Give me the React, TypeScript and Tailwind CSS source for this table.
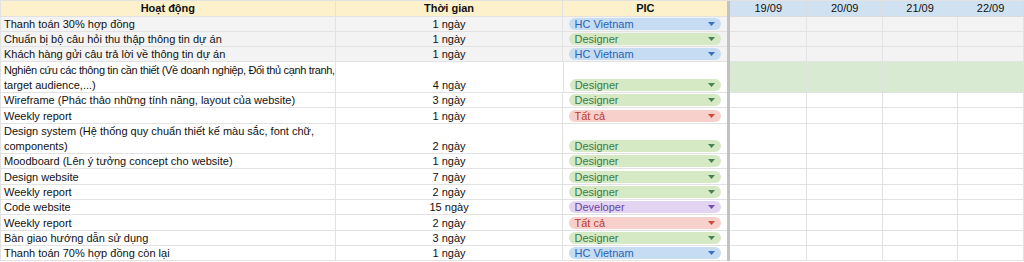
import React from 'react';

type Pic = 'HC Vietnam' | 'Designer' | 'Tất cả' | 'Developer';

interface Task {
  name: string[];
  days: string;
  pic: Pic;
  shaded?: boolean;
  greenDates?: boolean;
}

const tasks: Task[] = [
  { name: ['Thanh toán 30% hợp đồng'], days: '1 ngày', pic: 'HC Vietnam', shaded: true },
  { name: ['Chuẩn bị bộ câu hỏi thu thập thông tin dự án'], days: '1 ngày', pic: 'Designer', shaded: true },
  { name: ['Khách hàng gửi câu trả lời về thông tin dự án'], days: '1 ngày', pic: 'HC Vietnam', shaded: true },
  {
    name: ['Nghiên cứu các thông tin cần thiết (Về doanh nghiệp, Đối thủ cạnh tranh,', 'target audience,...)'],
    days: '4 ngày',
    pic: 'Designer',
    greenDates: true,
  },
  { name: ['Wireframe (Phác thảo những tính năng, layout của website)'], days: '3 ngày', pic: 'Designer' },
  { name: ['Weekly report'], days: '1 ngày', pic: 'Tất cả' },
  {
    name: ['Design system (Hệ thống quy chuẩn thiết kế màu sắc, font chữ,', 'components)'],
    days: '2 ngày',
    pic: 'Designer',
  },
  { name: ['Moodboard (Lên ý tưởng concept cho website)'], days: '1 ngày', pic: 'Designer' },
  { name: ['Design website'], days: '7 ngày', pic: 'Designer' },
  { name: ['Weekly report'], days: '2 ngày', pic: 'Designer' },
  { name: ['Code website'], days: '15 ngày', pic: 'Developer' },
  { name: ['Weekly report'], days: '2 ngày', pic: 'Tất cả' },
  { name: ['Bàn giao hướng dẫn sử dụng'], days: '3 ngày', pic: 'Designer' },
  { name: ['Thanh toán 70% hợp đồng còn lại'], days: '1 ngày', pic: 'HC Vietnam' },
];

const chipStyles: Record<Pic, { chip: string; arrow: string }> = {
  'HC Vietnam': { chip: 'bg-[#c6dcf2] text-[#2a62b8]', arrow: '#3a6fc0' },
  Designer: { chip: 'bg-[#d5e9c5] text-[#3b7a45]', arrow: '#4a8052' },
  'Tất cả': { chip: 'bg-[#f8d0cb] text-[#bf3a2e]', arrow: '#c9473b' },
  Developer: { chip: 'bg-[#e3d4f1] text-[#6a45a5]', arrow: '#6f50a6' },
};

const dates = ['19/09', '20/09', '21/09', '22/09'];
const dateWidths = ['w-[77px]', 'w-[76px]', 'w-[75px]', 'w-[66px]'];

const Chip = ({ pic }: { pic: Pic }) => {
  const style = chipStyles[pic];
  return (
    <div className={`mx-[6px] mb-[1px] h-[12px] flex-1 rounded-full flex items-center justify-between pl-[5px] pr-[6px] text-[11px] leading-[12px] ${style.chip}`}>
      <span>{pic}</span>
      <svg width="7" height="4" viewBox="0 0 7 4">
        <path d="M0 0 L7 0 L3.5 4 Z" fill={style.arrow} />
      </svg>
    </div>
  );
};

const App = () => {
  return (
    <div className="w-[1024px] h-[262px] overflow-hidden bg-white text-[#111] font-['Liberation_Sans',Arial,sans-serif] text-[11px]">
      {/* Header */}
      <div className="flex h-[16.5px] border-t border-[#e2e2e2]">
        <div className="w-[336px] border-l border-r border-b border-[#e2e2e2] bg-[#fdf1cc] font-bold flex items-center justify-center leading-[17px]">Hoạt động</div>
        <div className="w-[228px] border-r border-b border-[#e2e2e2] bg-[#fdf1cc] font-bold flex items-center justify-center leading-[17px]">Thời gian</div>
        <div className="w-[164px] border-b border-[#e2e2e2] bg-[#fdf1cc] font-bold flex items-center justify-center leading-[17px]">PIC</div>
        <div className="w-[3px] bg-[#c2c2c2]" />
        {dates.map((d, i) => (
          <div key={d} className={`${dateWidths[i]} border-r border-b border-[#dcdcdc] bg-[#d0e1f2] flex items-center justify-center leading-[17px]`}>
            {d}
          </div>
        ))}
        <div className="flex-1 border-b border-[#e2e2e2]" />
      </div>

      {/* Rows */}
      {tasks.map((task, idx) => {
        const height = task.name.length > 1 ? 'h-[30.6px]' : 'h-[15.3px]';
        const rowBg = task.shaded ? 'bg-[#f3f3f3]' : 'bg-white';
        const dateBg = task.greenDates ? 'bg-[#d9ead3]' : rowBg;
        return (
          <div key={idx} className={`flex ${height}`}>
            <div className={`w-[336px] border-l border-r border-b border-[#e2e2e2] ${rowBg} flex flex-col justify-end px-[3px] whitespace-nowrap`}>
              {task.name.map((line) => (
                <div key={line} className={`h-[15px] leading-[17px] ${line.length > 70 ? 'tracking-[-0.35px]' : ''}`}>
                  {line}
                </div>
              ))}
            </div>
            <div className={`w-[228px] border-r border-b border-[#e2e2e2] ${rowBg} flex items-end justify-center`}>
              <div className="h-[15px] leading-[17px]">{task.days}</div>
            </div>
            <div className={`w-[164px] border-b border-[#e2e2e2] ${rowBg} flex items-end`}>
              <Chip pic={task.pic} />
            </div>
            <div className="w-[3px] bg-[#c2c2c2]" />
            {dates.map((d, i) => (
              <div key={d} className={`${dateWidths[i]} border-r border-b border-[#e2e2e2] ${dateBg}`} />
            ))}
            <div className={`flex-1 border-b border-[#e2e2e2] ${dateBg}`} />
          </div>
        );
      })}
    </div>
  );
};

export default App;
